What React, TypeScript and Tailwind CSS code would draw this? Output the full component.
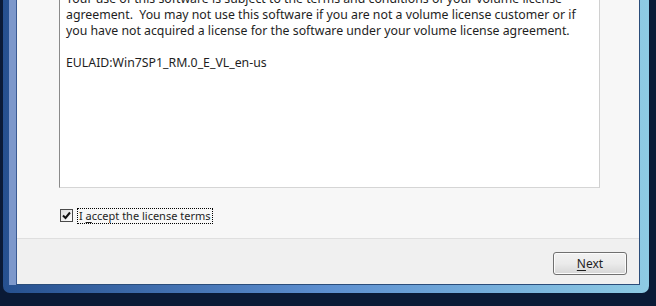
import type { FC } from 'react';

const font = { fontFamily: '"Noto Sans", "Open Sans", sans-serif' };

const CheckBox: FC = () => (
    <div className="flex h-[13px] w-[13px] items-center justify-center border border-[#4a4a4a] bg-gradient-to-br from-[#dcdcdc] to-[#ffffff]">
        <svg width="9" height="9" viewBox="0 0 9 9">
            <path d="M1 4.5 L3.5 7 L8 1.5" fill="none" stroke="#111" strokeWidth="2" />
        </svg>
    </div>
);

const App: FC = () => {
    return (
        <div className="flex h-[306px] w-[656px] flex-col overflow-hidden bg-[#0a1a36] pb-[13px] pl-[3px] pr-[7px]" style={font}>
            {/* window frame */}
            <div className="flex flex-1 flex-col rounded-b-[7px] bg-gradient-to-r from-[#26508f] via-[#5d8fd0] to-[#8ecbe4] pb-[8px] pl-[6px] pr-[9px]">
                <div className="flex flex-1 flex-col border-l-[7px] border-[#7d98cb]">
                    <div className="flex flex-1 flex-col border-b border-r border-[#2b4d7a] border-l border-l-[#3a5a92] bg-[#f7f7f7]">
                        {/* license text box */}
                        <div className="flex pl-[42px] pr-[39px]">
                            <div className="h-[188px] flex-1 overflow-hidden border-b border-l border-r border-b-[#d5d5d5] border-l-[#8a8a8a] border-r-[#d0d0d0] bg-white pl-[6px]">
                                <div className="-mt-[9px] text-[12.3px] leading-[16px] text-[#1e1e1e]">
                                    <p>Your use of this software is subject to the terms and conditions of your volume license</p>
                                    <p className="whitespace-pre">agreement.  You may not use this software if you are not a volume license customer or if</p>
                                    <p>you have not acquired a license for the software under your volume license agreement.</p>
                                    <p className="mt-[16px]">EULAID:Win7SP1_RM.0_E_VL_en-us</p>
                                </div>
                            </div>
                        </div>

                        {/* accept row */}
                        <div className="flex flex-1 items-start gap-[4px] pl-[43px] pt-[20px]">
                            <div className="pt-[1px]">
                                <CheckBox />
                            </div>
                            <span className="border border-dotted border-black px-[1px] text-[11px] leading-[14px] text-[#1e1e1e]">
                                I <span className="underline underline-offset-2">a</span>ccept the license terms
                            </span>
                        </div>

                        {/* button bar */}
                        <div className="flex h-[46px] justify-end border-t border-[#dfdfdf] bg-[#f0f0f0] pr-[12px] pt-[13px]">
                            <button className="h-[23px] w-[74px] rounded-[3px] border border-[#707070] bg-gradient-to-b from-[#f2f2f2] via-[#ebebeb] to-[#d6d6d6] text-[12px] text-[#1e1e1e] shadow-[inset_0_0_0_1px_#fcfcfc]">
                                <span className="underline underline-offset-2">N</span>ext
                            </button>
                        </div>
                    </div>
                </div>
            </div>
        </div>
    );
};

export default App;
